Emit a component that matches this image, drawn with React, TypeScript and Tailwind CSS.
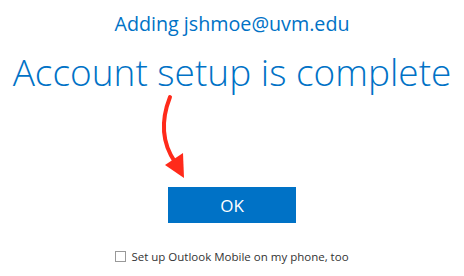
export default function App() {
  return (
    <div
      className="relative w-[464px] h-[276px] bg-white overflow-hidden flex flex-col items-center"
      style={{ fontFamily: '"Open Sans", "Noto Sans", sans-serif' }}
    >
      <p className="mt-[10px] text-[19.7px] leading-[28px] text-[#0072c6]">Adding jshmoe@uvm.edu</p>
      <h1 className="mt-[12px] text-[37px] leading-[44px] font-light text-[#0072c6] whitespace-nowrap">
        Account setup is complete
      </h1>

      <button className="mt-[93px] w-[128px] h-[36px] bg-[#0072c6] text-white text-[17px] leading-none">
        OK
      </button>

      <label className="mt-[28px] flex items-center gap-[5px] text-[11.5px] text-[#333] leading-none">
        <span className="w-[11px] h-[11px] border border-[#999] bg-white" />
        Set up Outlook Mobile on my phone, too
      </label>

      {/* red arrow pointing at the OK button */}
      <svg className="absolute left-0 top-0" width="464" height="276" viewBox="0 0 464 276">
        <path d="M170 97 C 161 120, 162 143, 175 162" fill="none" stroke="#ff2a1a" strokeWidth="4" strokeLinecap="round" />
        <polygon points="165,165 184,178 183,153" fill="#ff2a1a" />
      </svg>
    </div>
  );
}
